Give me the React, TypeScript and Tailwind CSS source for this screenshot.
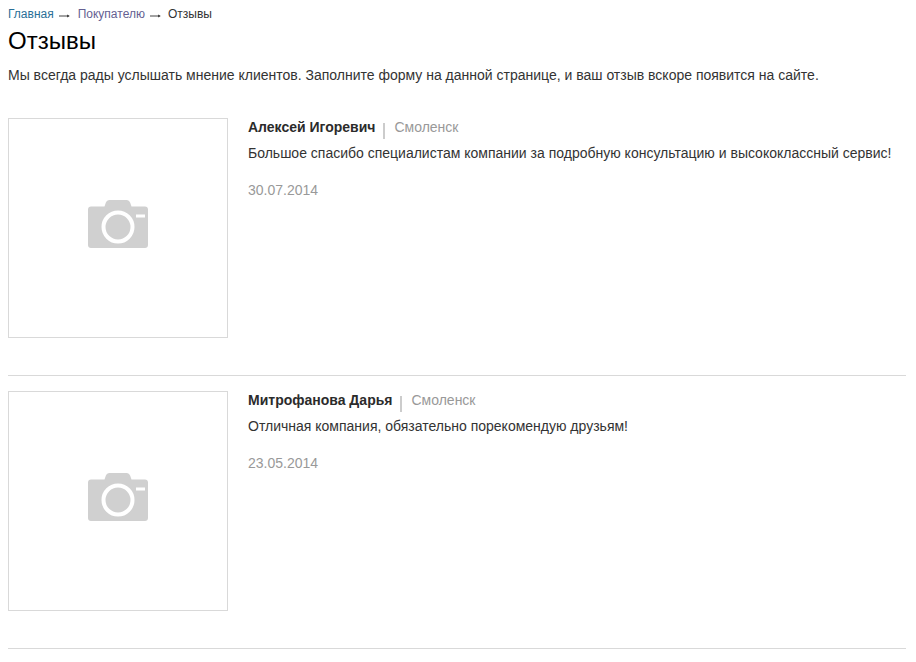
const font = { fontFamily: '"Liberation Sans", Arial, sans-serif' };

function Camera() {
  return (
    <svg width="60" height="48" viewBox="0 0 60 48" aria-hidden="true">
      <path
        fill="#d0d0d0"
        d="M3 6.500h13.500l1.200-3.500C18.400 1 19.800 0 21.500 0h17c1.700 0 3.100 1 3.800 3l1.200 3.500H57c1.800 0 3 1.200 3 3V45c0 1.800-1.200 3-3 3H3c-1.800 0-3-1.200-3-3V9.500c0-1.800 1.200-3 3-3z"
      />
      <circle cx="30" cy="27" r="14.500" fill="none" stroke="#ffffff" strokeWidth="4" />
      <rect x="48" y="14.500" width="9" height="3" fill="#ffffff" />
    </svg>
  );
}

function Arrow({ right }: { right: string }) {
  return (
    <svg className={right} width="11" height="7" viewBox="0 0 11 7" aria-hidden="true">
      <path d="M0 4h10" stroke="#444444" strokeWidth="1" fill="none" />
      <path d="M8 2.500 10.800 4 8 5.500z" fill="#444444" />
    </svg>
  );
}

function Review({ name, city, text, date }: { name: string; city: string; text: string; date: string }) {
  return (
    <div className="flex gap-5 border-b border-[#d9d9d9] pb-[37px]">
      <div className="flex h-[220px] w-[220px] shrink-0 items-center justify-center border border-[#d9d9d9] pb-2">
        <Camera />
      </div>
      <div className="-mt-px min-w-0 flex-1 text-sm leading-5 text-[#333333]">
        <div className="flex h-[20px] items-start">
          <span className="font-bold text-[#2b2b2b]">{name}</span>
          <span className="mt-[6px] mr-[9px] ml-2 h-4 w-[2px] bg-[#cccccc]" />
          <span className="text-[#999999]">{city}</span>
        </div>
        <p className="mt-[6px] whitespace-nowrap">{text}</p>
        <p className="mt-[17px] text-[#999999]">{date}</p>
      </div>
    </div>
  );
}

export default function App() {
  return (
    <div className="min-h-[662px] bg-white pt-[6px] pr-[10px] pl-2" style={font}>
      <nav className="flex h-4 items-center text-xs leading-4 text-[#333333]">
        <a className="text-[#2a6f97]">Главная</a>
        <Arrow right="mt-[2px] mr-2 ml-[5px]" />
        <a className="text-[#655f92]">Покупателю</a>
        <Arrow right="mt-[2px] mr-[7px] ml-[5px]" />
        <span>Отзывы</span>
      </nav>
      <h1 className="mt-[4px] text-2xl leading-[30px] font-normal text-black">Отзывы</h1>
      <p className="mt-[9px] text-sm leading-5 text-[#333333]">
        Мы всегда рады услышать мнение клиентов. Заполните форму на данной странице, и ваш отзыв вскоре появится на сайте.
      </p>
      <div className="mt-[33px] flex flex-col gap-[15px]">
        <Review
          name="Алексей Игоревич"
          city="Смоленск"
          text="Большое спасибо специалистам компании за подробную консультацию и высококлассный сервис!"
          date="30.07.2014"
        />
        <Review
          name="Митрофанова Дарья"
          city="Смоленск"
          text="Отличная компания, обязательно порекомендую друзьям!"
          date="23.05.2014"
        />
      </div>
    </div>
  );
}
